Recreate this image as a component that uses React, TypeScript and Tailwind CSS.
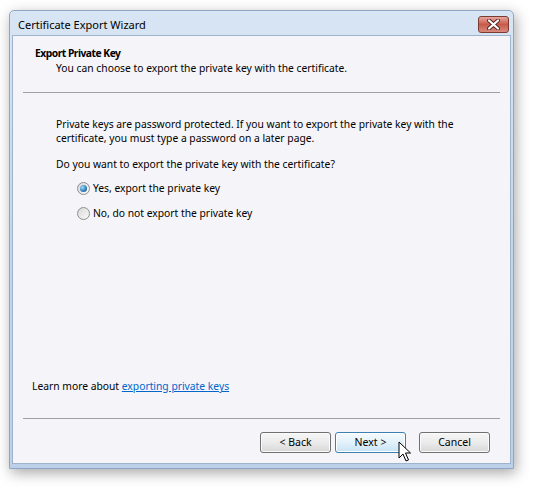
import React from 'react';

const font = { fontFamily: '"Noto Sans", "Liberation Sans", sans-serif' };

function Radio({ checked }: { checked?: boolean }) {
  return (
    <span className="relative flex h-[13px] w-[13px] items-center justify-center rounded-full border border-[#8e8f8f] bg-gradient-to-br from-[#d8d8d8] to-[#fafafa]">
      {checked && (
        <span className="h-[7px] w-[7px] rounded-full bg-[radial-gradient(circle_at_35%_35%,#a8dcf6,#2a7bb8_60%,#1b4f83)]" />
      )}
    </span>
  );
}

function Button({ label, active }: { label: string; active?: boolean }) {
  return (
    <button
      className={
        'h-[21px] w-[71px] rounded-[3px] border text-[10.5px] leading-none text-black ' +
        (active
          ? 'border-[#3c7fb1] bg-gradient-to-b from-[#f4fafe] via-[#e3f1fb] to-[#c6e3f6] shadow-[inset_0_0_0_1px_#ffffff]'
          : 'border-[#707070] bg-gradient-to-b from-[#f6f6f6] via-[#ebebeb] to-[#d7d7d7] shadow-[inset_0_0_0_1px_#fbfbfb]')
      }
    >
      {label}
    </button>
  );
}

export default function App() {
  return (
    <div className="relative h-[487px] w-[533px] overflow-hidden bg-white" style={font}>
      {/* window */}
      <div className="ml-[9px] mt-[10px] flex h-[459px] w-[505px] flex-col rounded-t-[5px] border border-[#8fa6c2] bg-gradient-to-b from-[#d8e5f4] via-[#c4d6ed] to-[#bcd0ea] px-[2px] pb-[4px] shadow-[2px_4px_14px_rgba(0,0,0,0.35)]">
        {/* title bar */}
        <div className="relative flex h-[24px] items-center pl-[6px] pt-[4px] text-[11px] text-black">
          <span>Certificate Export Wizard</span>
          <div className="absolute right-[2px] top-[5px] flex h-[17px] w-[31px] items-center justify-center rounded-[3px] border border-[#7b3b33] bg-gradient-to-b from-[#e7a79d] via-[#c75a4b] to-[#d88a7e]">
            <svg width="13" height="11" viewBox="0 0 13 11">
              <path d="M2 1.5 L11 9.5 M11 1.5 L2 9.5" stroke="#5a231d" strokeWidth="4" strokeLinecap="round" />
              <path d="M2 1.5 L11 9.5 M11 1.5 L2 9.5" stroke="#ffffff" strokeWidth="2.2" strokeLinecap="round" />
            </svg>
          </div>
        </div>

        {/* client area */}
        <div className="flex flex-1 flex-col border border-[#9fb3cc] bg-[#f5f4f8] text-[10.3px] text-black">
          <div className="pl-[22px] pt-[10px] font-bold leading-[15px] tracking-[-0.5px]">Export Private Key</div>
          <div className="pl-[43px] leading-[15px]">You can choose to export the private key with the certificate.</div>
          <div className="mx-[10px] mt-[16px] h-px bg-[#a0a0a0]" />

          <div className="pl-[43px] pt-[24px] leading-[14px]">
            <div>Private keys are password protected. If you want to export the private key with the</div>
            <div>certificate, you must type a password on a later page.</div>
            <div className="mt-[12px]">Do you want to export the private key with the certificate?</div>
            <div className="ml-[21px] mt-[10px] flex flex-col gap-[10px] leading-[15px]">
              <label className="flex items-center gap-[3px]">
                <Radio checked />
                <span>Yes, export the private key</span>
              </label>
              <label className="flex items-center gap-[3px]">
                <Radio />
                <span>No, do not export the private key</span>
              </label>
            </div>
          </div>

          <div className="mt-auto pl-[19px] leading-[15px]">
            Learn more about <span className="text-[#0066cc] underline">exporting private keys</span>
          </div>
          <div className="mx-[10px] mt-[24px] h-px bg-[#a0a0a0]" />
          <div className="flex justify-end gap-[4px] pb-[10px] pr-[20px] pt-[13px]">
            <Button label="< Back" />
            <Button label="Next >" active />
            <div className="w-[5px]" />
            <Button label="Cancel" />
          </div>
        </div>
      </div>

      {/* mouse pointer */}
      <svg className="absolute left-[398px] top-[441px]" width="13" height="22" viewBox="0 0 13 22">
        <path d="M1 1 L1 17 L5 13 L8 20 L10.5 19 L7.5 12 L12.5 12 Z" fill="#ffffff" stroke="#000000" strokeWidth="1" strokeLinejoin="round" />
      </svg>
    </div>
  );
}
